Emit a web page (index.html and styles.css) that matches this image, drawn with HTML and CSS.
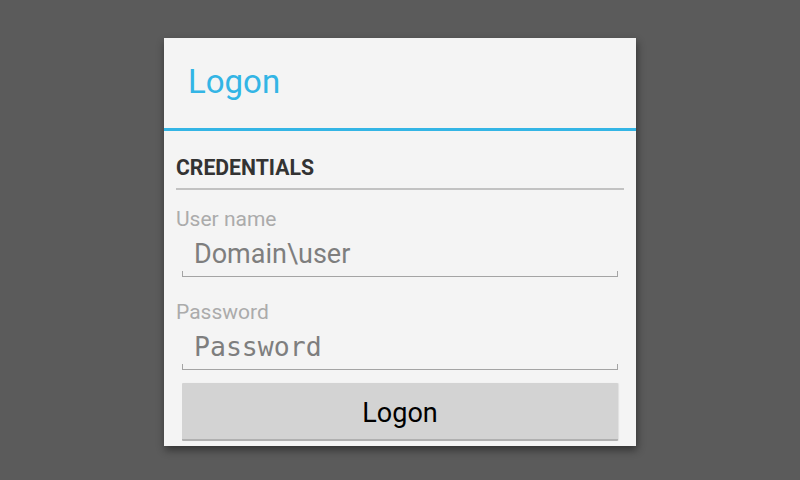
FILE: index.html
```html
<!DOCTYPE html>
<html>
<head>
<meta charset="utf-8">
<link rel="stylesheet" href="styles.css">
</head>
<body>
<div class="dialog">
  <div class="dialog-header">
    <h1 class="dialog-title">Logon</h1>
  </div>
  <div class="dialog-body">
    <div class="section-title">CREDENTIALS</div>
    <label class="field-label" for="user">User name</label>
    <div class="field">
      <input id="user" class="field-input" type="text" placeholder="Domain\user">
      <div class="field-line"></div>
    </div>
    <label class="field-label field-label-second" for="pass">Password</label>
    <div class="field">
      <input id="pass" class="field-input field-input-mono" type="password" placeholder="Password">
      <div class="field-line"></div>
    </div>
    <button class="logon-button" type="button">Logon</button>
  </div>
</div>
</body>
</html>
```

FILE: styles.css
```css
html, body {
  margin: 0;
  padding: 0;
}

body {
  width: 800px;
  height: 480px;
  background: #5b5b5b;
  display: flex;
  justify-content: center;
  align-items: flex-start;
  padding-top: 38px;
  box-sizing: border-box;
  font-family: Roboto, "Noto Sans", sans-serif;
  overflow: hidden;
}

.dialog {
  width: 472px;
  height: 408px;
  background: #f4f4f4;
  box-shadow: 1px 4px 8px rgba(0, 0, 0, 0.45);
  display: flex;
  flex-direction: column;
}

.dialog-header {
  height: 87px;
  padding-bottom: 3px;
  border-bottom: 3px solid #33b5e5;
  padding-left: 24px;
  display: flex;
  align-items: center;
}

.dialog-title {
  margin: 0;
  font-weight: normal;
  font-size: 33px;
  line-height: 86px;
  color: #33b5e5;
}

.dialog-body {
  padding: 25px 12px 0 12px;
  display: flex;
  flex-direction: column;
}

.section-title {
  font-size: 21.2px;
  font-weight: bold;
  line-height: 24px;
  color: #333333;
  padding-bottom: 8px;
  border-bottom: 2px solid #c2c2c2;
}

.field-label {
  display: block;
  margin-top: 17px;
  font-size: 21px;
  line-height: 24px;
  color: #ababab;
}

.field-label-second {
  margin-top: 23px;
}

.field {
  margin: 0 6px;
  padding-top: 7px;
  display: flex;
  flex-direction: column;
}

.field-input {
  display: block;
  border: none;
  outline: none;
  background: transparent;
  margin: 0;
  padding: 0 0 0 12px;
  height: 32px;
  line-height: 32px;
  font-family: Roboto, "Noto Sans", sans-serif;
  font-size: 27px;
  color: #333333;
}

.field-input::placeholder {
  color: #7e7e7e;
}

.field-input-mono {
  font-family: "DejaVu Sans Mono", "Liberation Mono", monospace;
  font-size: 26.5px;
}

.field-line {
  margin-top: 1px;
  height: 5px;
  border: 1px solid #a4a4a4;
  border-top: none;
}

.logon-button {
  margin: 13px 6px 0 6px;
  height: 58px;
  border: none;
  border-bottom: 2px solid #b0b0b0;
  border-radius: 1px;
  background: #d3d3d3;
  font-family: Roboto, "Noto Sans", sans-serif;
  font-size: 27px;
  color: #000000;
  padding: 3px 0 0 0;
  box-shadow: 1px 0 1px rgba(0, 0, 0, 0.08);
}
```
